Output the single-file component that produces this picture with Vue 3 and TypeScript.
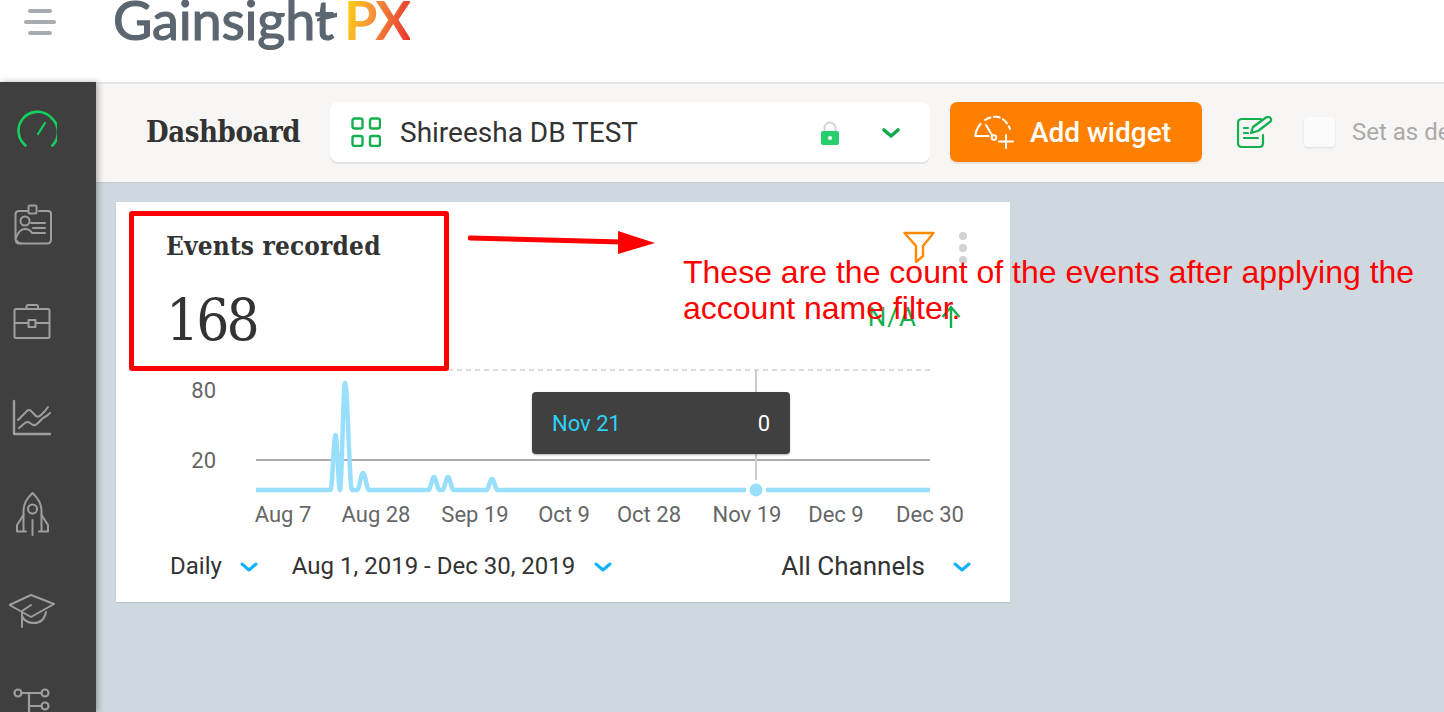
<template>
  <div class="app-shell">
    <header class="top-bar">
      <button type="button" class="top-bar__menu" aria-label="Menu">
        <span class="top-bar__line top-bar__line--short"></span>
        <span class="top-bar__line"></span>
        <span class="top-bar__line top-bar__line--short"></span>
      </button>
      <div class="logo">
        <span class="logo__name">Gainsight</span>
        <span class="logo__px">PX</span>
        <svg class="logo__tail" width="22" height="12" viewBox="0 0 22 12">
          <path d="M1 7.500L21 1.500v4.500L1 10.500z" fill="#5b6670" />
        </svg>
      </div>
    </header>

    <div class="layout">
      <nav class="side-nav">
        <div class="side-nav__item side-nav__item--active">
          <svg width="48" height="48" viewBox="0 0 48 48" fill="none" stroke="currentColor" stroke-width="2.6" stroke-linecap="round">
            <path d="M16.500 39.500A19 19 0 0 1 40.500 10" />
            <path d="M42 11.500A19 19 0 0 1 43.500 39.500" />
            <path d="M29 28l7-11" stroke-width="2.200" />
          </svg>
        </div>
        <div class="side-nav__item">
          <svg width="48" height="48" viewBox="0 0 48 48" fill="none" stroke="currentColor" stroke-width="2" stroke-linecap="round" stroke-linejoin="round">
            <path d="M18 9h-8q-3.500 0-3.500 3.500v24q0 5 3.500 5h28q4 0 4-4v-26q0-2.500-3-2.500h-9" />
            <rect x="19.500" y="3.500" width="8" height="8" rx="1.500" />
            <circle cx="16" cy="19" r="4.500" />
            <path d="M7 36c2-6 5-9 9-9s6 2 7 4M8 39q1 2 4 2.500M22 21h14M24 26h12M24 31h12" />
          </svg>
        </div>
        <div class="side-nav__item">
          <svg width="48" height="48" viewBox="0 0 48 48" fill="none" stroke="currentColor" stroke-width="2" stroke-linejoin="round">
            <rect x="5.500" y="11" width="35" height="29" rx="1.500" />
            <path d="M17.500 11V8.500q0-1.500 1.500-1.500h8.500q1.500 0 1.500 1.500V11M5.500 25H19M27 25h13.500" />
            <rect x="19.500" y="22" width="7" height="7" />
          </svg>
        </div>
        <div class="side-nav__item">
          <svg width="48" height="48" viewBox="0 0 48 48" fill="none" stroke="currentColor" stroke-width="2" stroke-linecap="round" stroke-linejoin="round">
            <path d="M5 7v33h36" stroke-width="2.400" />
            <path d="M9 26l8-8q3-4 6 0l4 4q2 2 5-1l4-4 3-4" />
            <path d="M10 34l6-5q3-2 5 0l3 2q2 1 5-2l5-5q3-1 7-5" />
          </svg>
        </div>
        <div class="side-nav__item">
          <svg width="48" height="48" viewBox="0 0 48 48" fill="none" stroke="currentColor" stroke-width="2" stroke-linecap="round" stroke-linejoin="round">
            <path d="M23.500 3C17 9 14.500 15 14.500 21V41M23.500 3C30 9 32.500 15 32.500 21V41" />
            <circle cx="23.500" cy="19" r="4.500" />
            <path d="M14.500 25L8 35v6.500h9M32.500 25L39 35v6.500h-9M23.500 30v15" />
          </svg>
        </div>
        <div class="side-nav__item">
          <svg width="48" height="48" viewBox="0 0 48 48" fill="none" stroke="currentColor" stroke-width="2" stroke-linecap="round" stroke-linejoin="round">
            <path d="M.5 19L22 9l23 9-23 13z" />
            <path d="M13 26v15M22 19l-9 6M13 30q3 7 12 7 10 0 12-11" />
          </svg>
        </div>
        <div class="side-nav__item">
          <svg width="48" height="48" viewBox="0 0 48 48" fill="none" stroke="currentColor" stroke-width="2.200" stroke-linecap="round">
            <circle cx="9" cy="11" r="3.500" />
            <circle cx="36" cy="11" r="3.500" />
            <circle cx="36" cy="24" r="3.500" />
            <path d="M12.500 11h20M20 11v34M20 24h12.500" />
          </svg>
        </div>
      </nav>

      <main class="content">
        <section class="toolbar">
          <h1 class="toolbar__title">Dashboard</h1>
          <div class="board-select">
            <svg class="board-select__grid" width="30" height="30" viewBox="0 0 30 30" fill="none" stroke="#12b04e" stroke-width="2.400">
              <rect x="1.500" y="1.500" width="10" height="10" rx="2" />
              <rect x="19" y="1.500" width="10" height="10" rx="2" />
              <rect x="1.500" y="19" width="10" height="10" rx="2" />
              <rect x="19" y="19" width="10" height="10" rx="2" />
            </svg>
            <span class="board-select__name">Shireesha DB TEST</span>
            <svg class="board-select__lock" width="20" height="24" viewBox="0 0 20 24">
              <path d="M4.500 12V7a5.500 5.500 0 0 1 11 0v5" fill="none" stroke="#d4d4d4" stroke-width="2" />
              <rect x="1" y="10" width="18" height="14" rx="2" fill="#26cf6c" />
              <circle cx="10" cy="17" r="2" fill="#fff" />
            </svg>
            <svg class="board-select__caret" width="20" height="12" viewBox="0 0 20 12" fill="none" stroke="#0fa84a" stroke-width="3.600" stroke-linecap="round" stroke-linejoin="round">
              <path d="M3 3l7 6 7-6" />
            </svg>
          </div>
          <button type="button" class="add-widget">
            <svg width="40" height="34" viewBox="0 0 40 34" fill="none" stroke="#fff" stroke-width="2" stroke-linecap="round">
              <path d="M1.500 21q0-6 5-12" />
              <path d="M1.500 21h13" />
              <path d="M12 10l6 10" />
              <circle cx="20" cy="22.500" r="2.300" />
              <path d="M11 5q6-4 13-3 8 2 12 12" stroke-dasharray="6 3.500" />
              <path d="M32 20v13M25 26.500h14" />
            </svg>
            <span>Add widget</span>
          </button>
          <svg class="toolbar__edit" width="36" height="32" viewBox="0 0 36 32" fill="none" stroke="#12b04e" stroke-width="2.200" stroke-linecap="round" stroke-linejoin="round">
            <path d="M24 3H5q-4 0-4 4v20q0 4 4 4h17q4 0 4-4v-8" />
            <path d="M7 12h4M7 17h4M7 22h14M14 17l2-6L29 1.500q2-1 4 0 2 2 .5 4L21 15z" />
          </svg>
          <label class="default-check">
            <span class="default-check__box"></span>
            <span>Set as default</span>
          </label>
        </section>

        <section class="widget">
          <div class="widget__head">
            <div>
              <h2 class="widget__title">Events recorded</h2>
              <div class="widget__count">168</div>
            </div>
            <div class="widget__tools">
              <div class="widget__actions">
                <svg width="32" height="32" viewBox="0 0 32 32" fill="none" stroke="#ff8a00" stroke-width="2.400" stroke-linejoin="round">
                  <path d="M1.500 2h29L20 15v10l-7 6V15z" />
                </svg>
                <div class="widget__dots"><i></i><i></i><i></i></div>
              </div>
              <div class="widget__trend">
                <span>N/A</span>
                <svg width="20" height="24" viewBox="0 0 20 24" fill="none" stroke="#12b04e" stroke-width="2.400">
                  <path d="M10 23V2M1.500 12L10 2l8.500 10" />
                </svg>
              </div>
            </div>
          </div>

          <div class="chart">
            <svg width="894" height="170" viewBox="0 0 894 170">
              <path d="M332 5H814" stroke="#cfcfcf" stroke-width="1.500" stroke-dasharray="5 4" fill="none" />
              <path d="M140 95H814" stroke="#adadad" stroke-width="2" fill="none" />
              <path d="M640 5V115" stroke="#cccccc" stroke-width="2" fill="none" />
              <path :d="linePath" stroke="#97dffd" stroke-width="4.500" fill="none" stroke-linejoin="round" />
              <path d="M630 125H650" stroke="#fff" stroke-width="8" fill="none" />
              <circle cx="640" cy="125" r="6.500" fill="#97dffd" />
              <text x="100" y="33" text-anchor="end" class="chart__tick">80</text>
              <text x="100" y="103" text-anchor="end" class="chart__tick">20</text>
              <text v-for="t in xTicks" :key="t.label" :x="t.x" y="157" text-anchor="middle" class="chart__tick">{{ t.label }}</text>
            </svg>
            <div class="chart__tooltip">
              <span class="chart__tooltip-date">Nov 21</span>
              <span>0</span>
            </div>
          </div>

          <div class="widget__foot">
            <span class="foot-pick foot-pick--daily">Daily<svg v-bind="caret"><path d="M2 2l7 6 7-6" /></svg></span>
            <span class="foot-pick foot-pick--range">Aug 1, 2019 - Dec 30, 2019<svg v-bind="caret"><path d="M2 2l7 6 7-6" /></svg></span>
            <span class="foot-pick foot-pick--channels">All Channels<svg v-bind="caret"><path d="M2 2l7 6 7-6" /></svg></span>
          </div>

          <!-- screenshot annotation, drawn on top of the card -->
          <div class="note-box"></div>
          <svg class="note-arrow" width="200" height="30" viewBox="0 0 200 30">
            <path d="M2 9l152 4" stroke="#ff0000" stroke-width="5" stroke-linecap="round" fill="none" />
            <path d="M150 2l37 12-37 11z" fill="#ff0000" />
          </svg>
          <p class="note-text">These are the count of the events after applying the<br />account name filter.</p>
        </section>
      </main>
    </div>
  </div>
</template>

<script setup lang="ts">
interface Peak {
  x: number
  h: number
  left: number
  right: number
}

const peaks: Peak[] = [
  { x: 219.5, h: 55, left: 5, right: 4.5 },
  { x: 229, h: 107, left: 5, right: 7 },
  { x: 247, h: 17, left: 6, right: 6 },
  { x: 318, h: 13, left: 5.5, right: 5.5 },
  { x: 332, h: 13, left: 5.5, right: 5.5 },
  { x: 376, h: 11, left: 5.5, right: 5.5 },
]

const baseY = 125

// spikes are drawn as narrow bells on a flat baseline
const buildLine = (): string => {
  const pts: string[] = []
  for (let x = 140; x <= 814; x += 0.5) {
    let y = baseY
    for (const p of peaks) {
      const half = x < p.x ? p.left : p.right
      const d = Math.abs(x - p.x)
      if (d < half) {
        const bell = Math.cos((d / half) * (Math.PI / 2)) ** 2
        y = Math.min(y, baseY - p.h * bell)
      }
    }
    pts.push(`${x},${y.toFixed(1)}`)
  }
  return 'M' + pts.join('L')
}

const linePath = buildLine()

const xTicks = [
  { label: 'Aug 7', x: 167 },
  { label: 'Aug 28', x: 260 },
  { label: 'Sep 19', x: 359 },
  { label: 'Oct 9', x: 448 },
  { label: 'Oct 28', x: 533 },
  { label: 'Nov 19', x: 631 },
  { label: 'Dec 9', x: 720 },
  { label: 'Dec 30', x: 814 },
]

const caret = {
  width: 18,
  height: 10,
  viewBox: '0 0 18 10',
  fill: 'none',
  stroke: '#0fb0ff',
  'stroke-width': 3,
  'stroke-linecap': 'round',
  'stroke-linejoin': 'round',
  class: 'foot-pick__caret',
}
</script>

<style>
html,
body {
  margin: 0;
  overflow: hidden;
  background: #fff;
}
</style>

<style scoped>
.app-shell {
  width: 1444px;
  height: 712px;
  overflow: hidden;
  display: flex;
  flex-direction: column;
  font-family: Roboto, "Liberation Sans", sans-serif;
  color: #333;
}

.top-bar {
  height: 82px;
  flex: none;
  display: flex;
  align-items: flex-start;
  background: #fff;
  box-sizing: border-box;
}

.top-bar__menu {
  width: 32px;
  margin: 9px 0 0 24px;
  padding: 0;
  border: none;
  background: none;
  display: flex;
  flex-direction: column;
  align-items: center;
  gap: 7px;
}

.top-bar__line {
  display: block;
  width: 32px;
  height: 4px;
  border-radius: 2px;
  background: #a7abaf;
}

.top-bar__line--short {
  width: 24px;
}

.logo {
  position: relative;
  margin-left: 57px;
  margin-top: -5px;
  display: flex;
  gap: 10px;
  font-family: Lato, "Open Sans", sans-serif;
  font-size: 54px;
  line-height: 50px;
  letter-spacing: -0.2px;
  white-space: nowrap;
}

.logo__name {
  color: #5b6670;
  -webkit-text-stroke: 1.2px #5b6670;
}

.logo__px {
  font-weight: 700;
  letter-spacing: -1.5px;
  background: linear-gradient(100deg, #ffcf10 5%, #f6983a 40%, #e8392f 95%);
  -webkit-background-clip: text;
  background-clip: text;
  color: transparent;
}

.logo__tail {
  position: absolute;
  left: 203px;
  top: 16px;
}

.layout {
  flex: 1;
  display: flex;
  min-height: 0;
}

.side-nav {
  width: 96px;
  flex: none;
  background: #3f3f3f;
  color: #9c9ea0;
  box-shadow: 2px 0 6px rgba(0, 0, 0, 0.3);
  position: relative;
  z-index: 2;
}

.side-nav__item {
  height: 96px;
  padding-left: 9px;
  display: flex;
  align-items: center;
}

.side-nav__item--active {
  color: #13d25c;
}

.content {
  flex: 1;
  min-width: 0;
  background: #cfd8df;
}

.toolbar {
  height: 100px;
  box-sizing: border-box;
  border-top: 2px solid #e6e6e6;
  background: #f7f6f4;
  display: flex;
  align-items: center;
  padding: 0 0 2px 50px;
  white-space: nowrap;
  box-shadow: 0 1px 1px #c9c9c9;
}

.toolbar__title {
  width: 184px;
  flex: none;
  margin: 0;
  font-family: "DejaVu Serif Condensed", "DejaVu Serif", serif;
  font-size: 29px;
  font-weight: 700;
  letter-spacing: -0.4px;
  color: #333;
}

.board-select {
  width: 600px;
  height: 60px;
  flex: none;
  box-sizing: border-box;
  display: flex;
  align-items: center;
  padding-left: 21px;
  background: #fff;
  border-radius: 8px;
  box-shadow: 0 2px 0 #e2e2e2;
}

.board-select__name {
  margin-left: 19px;
  width: 420px;
  font-size: 28px;
  color: #333;
}

.board-select__lock {
  margin-top: 1px;
}

.board-select__caret {
  margin-left: 41px;
  margin-top: 1px;
}

.add-widget {
  width: 252px;
  height: 60px;
  flex: none;
  margin-left: 20px;
  padding: 0 0 0 24px;
  border: none;
  border-radius: 7px;
  background: #ff7f00;
  box-shadow: 0 2px 0 #e8e2da;
  color: #fff;
  display: flex;
  align-items: center;
  gap: 16px;
  font-family: inherit;
  font-size: 28px;
  font-weight: 500;
}

.toolbar__edit {
  margin-left: 35px;
  flex: none;
}

.default-check {
  margin-left: 31px;
  display: flex;
  align-items: center;
  gap: 17px;
  font-size: 24px;
  color: #aaa;
}

.default-check__box {
  width: 31px;
  height: 30px;
  border-radius: 4px;
  background: #fbfbfb;
  box-shadow: 0 1px 2px #ddd;
}

.widget {
  position: relative;
  width: 894px;
  height: 400px;
  margin: 20px 0 0 20px;
  background: #fff;
  box-shadow: 0 1px 1px #bcc4ca;
}

.widget__head {
  height: 163px;
  display: flex;
  justify-content: space-between;
  padding: 26px 43px 0 50px;
  box-sizing: border-box;
}

.widget__title {
  margin: 0;
  font-family: "DejaVu Serif Condensed", "DejaVu Serif", serif;
  font-size: 26px;
  font-weight: 700;
  line-height: 36px;
  letter-spacing: 0.15px;
  color: #333;
}

.widget__count {
  margin-top: 21px;
  font-family: "DejaVu Serif Condensed", "DejaVu Serif", serif;
  font-size: 58px;
  line-height: 70px;
  letter-spacing: -3px;
  color: #333;
}

.widget__tools {
  display: flex;
  flex-direction: column;
  align-items: flex-end;
}

.widget__actions {
  display: flex;
  align-items: flex-start;
  gap: 24px;
  margin-top: 3px;
}

.widget__dots {
  display: flex;
  flex-direction: column;
  gap: 4px;
  padding-top: 1px;
}

.widget__dots i {
  display: block;
  width: 8px;
  height: 8px;
  border-radius: 50%;
  background: #d2d2d2;
}

.widget__trend {
  display: flex;
  align-items: center;
  gap: 24px;
  margin-top: 38px;
  margin-right: 6px;
  font-size: 26px;
  line-height: 30px;
  letter-spacing: 1px;
  color: #12b04e;
}

.chart {
  position: relative;
  height: 170px;
}

.chart svg {
  display: block;
}

.chart__tick {
  font-family: Roboto, "Liberation Sans", sans-serif;
  font-size: 22px;
  fill: #666;
}

.chart__tooltip {
  position: absolute;
  left: 416px;
  top: 27px;
  width: 258px;
  height: 62px;
  box-sizing: border-box;
  padding: 0 20px;
  display: flex;
  align-items: center;
  justify-content: space-between;
  background: #404040;
  border-radius: 4px;
  box-shadow: 0 1px 2px rgba(0, 0, 0, 0.3);
  color: #fff;
  font-size: 22px;
}

.chart__tooltip-date {
  color: #2bd3fb;
}

.widget__foot {
  display: flex;
  align-items: center;
  padding: 16px 39px 0 54px;
  font-size: 24px;
  color: #333;
  white-space: nowrap;
}

.foot-pick {
  display: flex;
  align-items: center;
}

.foot-pick--daily {
  margin-right: 34px;
}

.foot-pick--range .foot-pick__caret {
  margin-left: 19px;
}

.foot-pick--channels {
  margin-left: auto;
  font-size: 26px;
}

.foot-pick__caret {
  margin-left: 18px;
  margin-top: 2px;
}

.foot-pick--channels .foot-pick__caret {
  margin-left: 28px;
}

.note-box {
  position: absolute;
  left: 13px;
  top: 9px;
  width: 320px;
  height: 160px;
  box-sizing: border-box;
  border: 5.5px solid #ff0000;
  border-radius: 3px;
}

.note-arrow {
  position: absolute;
  left: 352px;
  top: 27px;
}

.note-text {
  position: absolute;
  left: 567px;
  top: 52px;
  margin: 0;
  width: 800px;
  font-family: "Liberation Sans", Arial, sans-serif;
  font-size: 32px;
  line-height: 36px;
  color: #ff0000;
  white-space: nowrap;
}
</style>
